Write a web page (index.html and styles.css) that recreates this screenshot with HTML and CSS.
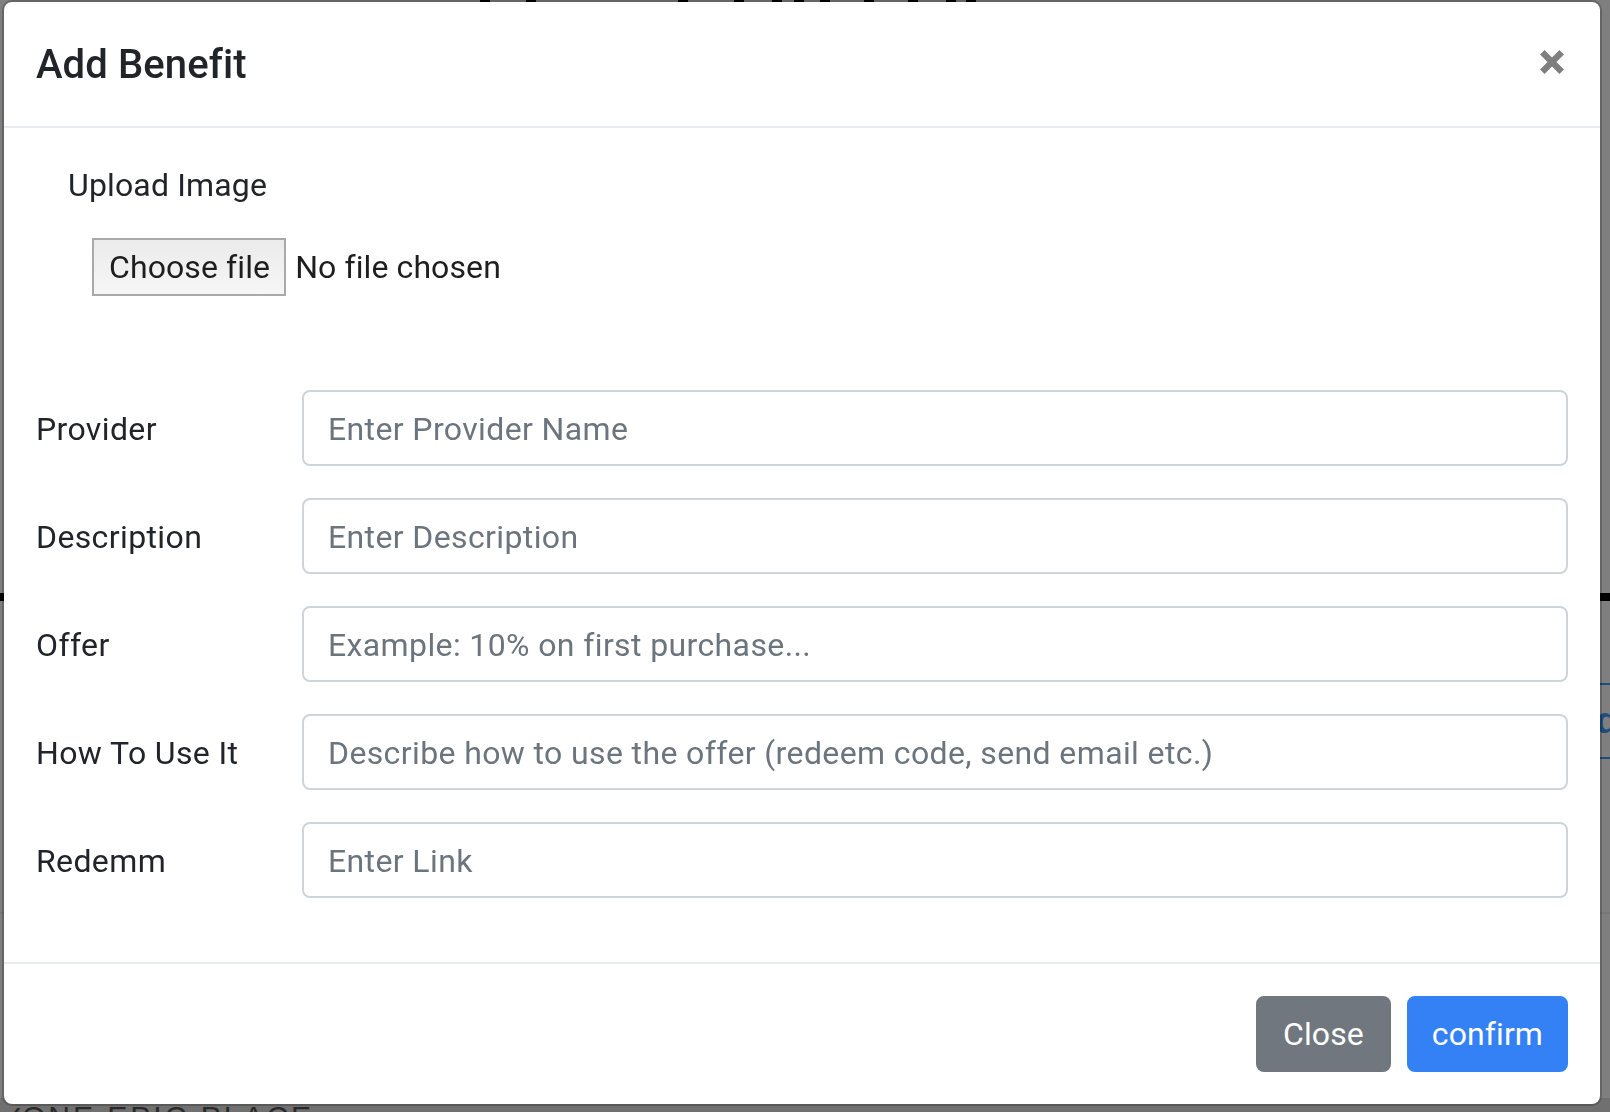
FILE: index.html
```html
<!DOCTYPE html>
<html lang="en">
<head>
<meta charset="utf-8">
<title>Add Benefit</title>
<link rel="stylesheet" href="styles.css">
</head>
<body>
<div class="page">
  <div class="page-top"><span></span><span></span><span></span><span></span><span></span><span></span><span></span><span></span><span></span><span></span><span></span></div>
  <div class="page-rule"></div>
  <div class="page-cta"><span class="cta">Add</span></div>
  <div class="page-hr"></div>
  <div class="page-foot"><span class="tick">✓</span>ONE EPIC PLACE</div>
</div>
<div class="backdrop"></div>
<div class="modal">
  <div class="modal-header">
    <h5 class="modal-title">Add Benefit</h5>
    <button class="close" type="button" aria-label="Close">
      <svg width="24" height="24" viewBox="0 0 24 24"><path d="M2.3 2.3L21.7 21.7M21.7 2.3L2.3 21.7" stroke="#7f7f7f" stroke-width="6.4" fill="none"/></svg>
    </button>
  </div>
  <div class="modal-body">
    <div class="upload">
      <div class="upload-label">Upload Image</div>
      <div class="file-row">
        <span class="file-btn">Choose file</span>
        <span class="file-name">No file chosen</span>
      </div>
    </div>
    <div class="form-row">
      <label class="col-label">Provider</label>
      <input class="form-control" type="text" placeholder="Enter Provider Name">
    </div>
    <div class="form-row">
      <label class="col-label">Description</label>
      <input class="form-control" type="text" placeholder="Enter Description">
    </div>
    <div class="form-row">
      <label class="col-label">Offer</label>
      <input class="form-control" type="text" placeholder="Example: 10% on first purchase...">
    </div>
    <div class="form-row">
      <label class="col-label">How To Use It</label>
      <input class="form-control" type="text" placeholder="Describe how to use the offer (redeem code, send email etc.)">
    </div>
    <div class="form-row">
      <label class="col-label">Redemm</label>
      <input class="form-control" type="text" placeholder="Enter Link">
    </div>
  </div>
  <div class="modal-footer">
    <button class="btn btn-secondary" type="button">Close</button>
    <button class="btn btn-primary" type="button">confirm</button>
  </div>
</div>
</body>
</html>
```
FILE: styles.css
```css
* { box-sizing: border-box; }
html, body { margin: 0; height: 100%; }
body {
  font-family: Roboto, "Helvetica Neue", Arial, sans-serif;
  overflow: hidden;
  background: #fff;
  color: #212529;
}

/* page behind the modal */
.page {
  height: 1112px;
  display: flex;
  flex-direction: column;
  overflow: hidden;
  font-family: "Liberation Sans", Arial, sans-serif;
}
.page-top { height: 2px; display: flex; flex-shrink: 0; }
.page-top span { width: 10px; height: 2px; background: #000; }
.page-top span:nth-child(1) { margin-left: 480px; }
.page-top span:nth-child(2) { margin-left: 36px; }
.page-top span:nth-child(3) { margin-left: 142px; }
.page-top span:nth-child(4) { margin-left: 46px; }
.page-top span:nth-child(5) { margin-left: 28px; }
.page-top span:nth-child(6) { margin-left: 12px; }
.page-top span:nth-child(7) { margin-left: 16px; }
.page-top span:nth-child(8) { margin-left: 34px; }
.page-top span:nth-child(9) { margin-left: 34px; }
.page-top span:nth-child(10) { margin-left: 28px; }
.page-top span:nth-child(11) { margin-left: 10px; }
.page-rule { margin-top: 591px; height: 8px; background: #000; flex-shrink: 0; }
.page-cta {
  margin-top: 82px;
  display: flex;
  justify-content: flex-end;
  flex-shrink: 0;
}
.cta {
  margin-right: -48px;
  width: 200px;
  height: 76px;
  border-top: 2px solid #3f9bff;
  border-bottom: 2px solid #3f9bff;
  color: #3f9bff;
  font-size: 36px;
  font-weight: 700;
  line-height: 72px;
  padding-left: 90px;
}
.page-hr { margin-top: 153px; height: 2px; background: #eee; flex-shrink: 0; }
.page-foot {
  margin-top: auto;
  height: 14px;
  flex-shrink: 0;
  background: #e0e0e0;
  padding: 4px 0 0 22px;
  font-size: 30px;
  line-height: 30px;
  letter-spacing: 3px;
  color: #555;
  white-space: nowrap;
}
.tick { display: inline-block; width: 12px; margin-left: -22px; margin-right: 10px; letter-spacing: 0; }

.backdrop {
  position: fixed;
  inset: 0;
  background: rgba(0, 0, 0, .5);
}

/* modal */
.modal {
  position: absolute;
  top: 0;
  left: 2px;
  width: 1600px;
  background: #fff;
  background-clip: padding-box;
  border: 2px solid rgba(0, 0, 0, .2);
  border-radius: 10px;
  letter-spacing: 0.38px;
}
.modal-header {
  display: flex;
  align-items: flex-start;
  justify-content: space-between;
  padding: 32px;
  border-bottom: 2px solid #e9ecef;
}
.modal-title {
  margin: 0;
  padding-top: 1px;
  font-size: 40px;
  font-weight: 500;
  line-height: 59px;
  letter-spacing: 0.1px;
  color: #212529;
}
.close {
  display: block;
  margin: 16px 4px 0 0;
  padding: 0;
  width: 24px;
  height: 24px;
  border: 0;
  background: transparent;
}
.close svg { display: block; }

.modal-body { padding: 32px; }
.upload { padding-left: 32px; }
.upload-label { font-size: 32px; line-height: 48px; padding-top: 1px; height: 48px; letter-spacing: 0.15px; }
.file-row {
  display: flex;
  align-items: center;
  margin: 30px 0 0 24px;
  font-size: 32px;
  letter-spacing: 0.1px;
}
.file-btn {
  height: 58px;
  line-height: 54px;
  padding: 0 14px 0 15px;
  border: 2px solid #a9a9a9;
  background: linear-gradient(#ebebeb, #f6f6f6);
  color: #1e1e1e;
}
.file-name { margin-left: 9px; color: #1e1e1e; }

.upload + .form-row { margin-top: 94px; }
.form-row {
  display: grid;
  grid-template-columns: 266px 1fr;
  margin-bottom: 32px;
}
.col-label {
  font-size: 32px;
  line-height: 48px;
  padding-top: 15px;
  color: #212529;
}
.form-control {
  display: block;
  width: 100%;
  height: 76px;
  padding: 13px 24px 11px;
  border: 2px solid #ced4da;
  border-radius: 8px;
  font-family: inherit;
  font-size: 32px;
  letter-spacing: 0.38px;
  line-height: 48px;
  color: #495057;
  background: #fff;
  outline: none;
}
.form-control::placeholder { color: #6c757d; opacity: 1; }

.modal-footer {
  display: flex;
  justify-content: flex-end;
  gap: 16px;
  padding: 32px;
  border-top: 2px solid #e9ecef;
}
.btn {
  height: 76px;
  padding: 0 24px;
  border: 2px solid transparent;
  border-radius: 8px;
  font-family: inherit;
  font-size: 32px;
  letter-spacing: 0.1px;
  line-height: 72px;
  color: #fff;
}
.btn-secondary { background: #71777f; border-color: #71777f; padding: 0 25px; }
.btn-primary { background: #3481f6; border-color: #3481f6; padding: 0 23px; }
```
